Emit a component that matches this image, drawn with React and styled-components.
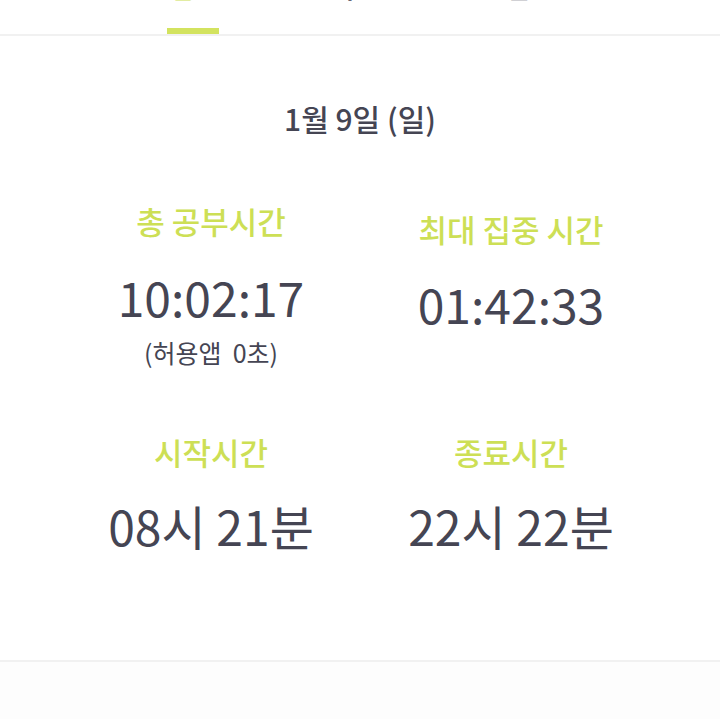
import React from "react";
import styled, { createGlobalStyle } from "styled-components";

const Global = createGlobalStyle`
  html, body { margin: 0; padding: 0; background: #fdfdfd; }
  body { font-family: "Noto Sans CJK KR", "Noto Sans", sans-serif; color: #454553; }
`;

const Page = styled.div`
  width: 720px;
  height: 719px;
  overflow: hidden;
  background: #fdfdfd;
`;

const TabBar = styled.div`
  display: flex;
  justify-content: center;
  gap: 116px;
  margin-top: -30px;
  border-bottom: 2px solid #f1f1f1;
  padding-left: 2px;
  background: #ffffff;
`;

const Tab = styled.div`
  position: relative;
  font-size: 24px;
  font-weight: 700;
  line-height: 36px;
  padding: 0 4px 28px;
  color: ${(p) => (p.$active ? "#cfe05a" : "#454553")};
  &::after {
    content: "";
    display: ${(p) => (p.$active ? "block" : "none")};
    position: absolute;
    left: 0;
    right: 0;
    bottom: 0;
    height: 6px;
    background: #d3e35f;
  }
`;

const Content = styled.div`
  height: 624px;
  border-bottom: 2px solid #f1f1f1;
  background: #ffffff;
  display: flex;
  flex-direction: column;
  align-items: center;
`;

const DateTitle = styled.div`
  margin-top: 62px;
  font-size: 30px;
  font-weight: 500;
  line-height: 40px;
  color: #454553;
`;

const Grid = styled.div`
  margin-top: 63px;
  width: 600px;
  display: grid;
  grid-template-columns: 300px 300px;
  row-gap: 65px;
  padding-left: 2px;
`;

const Cell = styled.div`
  display: flex;
  flex-direction: column;
  align-items: center;
  padding-top: ${(p) => p.$offset || 0}px;
`;

const Label = styled.div`
  font-size: 31px;
  font-weight: 500;
  line-height: 40px;
  color: #cddf55;
`;

const Value = styled.div`
  margin-top: ${(p) => p.$gap}px;
  font-size: 48px;
  font-weight: 400;
  line-height: 60px;
  color: #454553;
`;

const Sub = styled.div`
  margin-top: 11px;
  font-size: 25px;
  line-height: 30px;
  color: #454553;
`;

export default function App() {
  return (
    <Page>
      <Global />
      <TabBar>
        <Tab $active>일간</Tab>
        <Tab>주간</Tab>
        <Tab>월간</Tab>
      </TabBar>
      <Content>
        <DateTitle>1월 9일 (일)</DateTitle>
        <Grid>
          <Cell>
            <Label>총 공부시간</Label>
            <Value $gap={25}>10:02:17</Value>
            <Sub>(허용앱&nbsp; 0초)</Sub>
          </Cell>
          <Cell $offset={8}>
            <Label>최대 집중 시간</Label>
            <Value $gap={24}>01:42:33</Value>
          </Cell>
          <Cell>
            <Label>시작시간</Label>
            <Value $gap={23}>08시 21분</Value>
          </Cell>
          <Cell>
            <Label>종료시간</Label>
            <Value $gap={23}>22시 22분</Value>
          </Cell>
        </Grid>
      </Content>
    </Page>
  );
}
